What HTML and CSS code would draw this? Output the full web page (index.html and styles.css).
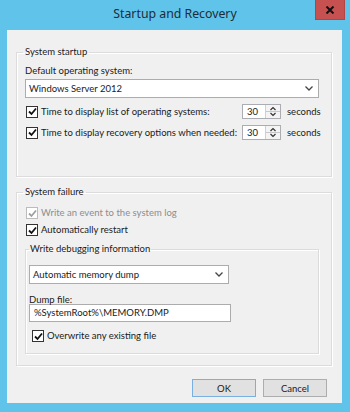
FILE: index.html
```html
<!DOCTYPE html>
<html>
<head>
<meta charset="utf-8">
<link rel="stylesheet" href="styles.css">
</head>
<body>
<div class="window">
  <div class="titlebar">
    <span class="title">Startup and Recovery</span>
    <div class="close"><svg width="10" height="8" viewBox="0 0 10 8"><path d="M1.5 0.5 L8.5 7.5 M8.5 0.5 L1.5 7.5" stroke="#111" stroke-width="2"/></svg></div>
  </div>
  <div class="client">
    <fieldset class="group g1">
      <legend>System startup</legend>
      <div class="label">Default operating system:</div>
      <div class="select wide"><span>Windows Server 2012</span><svg class="chev" width="8" height="5" viewBox="0 0 8 5"><path d="M0.5 0.5 L4 4 L7.5 0.5" fill="none" stroke="#444" stroke-width="1.3"/></svg></div>
      <div class="spinrow r1">
        <div class="check"><span class="box"><svg width="9" height="9" viewBox="0 0 9 9"><path d="M1 4.5 L3.5 7 L8 1.5" fill="none" stroke="#111" stroke-width="1.8"/></svg></span><span>Time to display list of operating systems:</span></div>
        <div class="spin"><span class="num">30</span><span class="arrows"><svg width="14" height="13" viewBox="0 0 14 13"><path d="M4.5 5 L7 2.5 L9.5 5" fill="none" stroke="#333" stroke-width="1.2"/><path d="M4.5 8 L7 10.5 L9.5 8" fill="none" stroke="#333" stroke-width="1.2"/><path d="M0 6.5 H14" stroke="#c8c8c8" stroke-width="1"/></svg></span></div>
        <span class="secs">seconds</span>
      </div>
      <div class="spinrow r2">
        <div class="check"><span class="box"><svg width="9" height="9" viewBox="0 0 9 9"><path d="M1 4.5 L3.5 7 L8 1.5" fill="none" stroke="#111" stroke-width="1.8"/></svg></span><span>Time to display recovery options when needed:</span></div>
        <div class="spin"><span class="num">30</span><span class="arrows"><svg width="14" height="13" viewBox="0 0 14 13"><path d="M4.5 5 L7 2.5 L9.5 5" fill="none" stroke="#333" stroke-width="1.2"/><path d="M4.5 8 L7 10.5 L9.5 8" fill="none" stroke="#333" stroke-width="1.2"/><path d="M0 6.5 H14" stroke="#c8c8c8" stroke-width="1"/></svg></span></div>
        <span class="secs">seconds</span>
      </div>
    </fieldset>
    <fieldset class="group g2">
      <legend>System failure</legend>
      <div class="check disabled c1"><span class="box"><svg width="9" height="9" viewBox="0 0 9 9"><path d="M1 4.5 L3.5 7 L8 1.5" fill="none" stroke="#a0a0a0" stroke-width="1.8"/></svg></span><span>Write an event to the system log</span></div>
      <div class="check c2"><span class="box"><svg width="9" height="9" viewBox="0 0 9 9"><path d="M1 4.5 L3.5 7 L8 1.5" fill="none" stroke="#111" stroke-width="1.8"/></svg></span><span>Automatically restart</span></div>
      <fieldset class="group inner">
        <legend>Write debugging information</legend>
        <div class="select dump"><span>Automatic memory dump</span><svg class="chev" width="8" height="5" viewBox="0 0 8 5"><path d="M0.5 0.5 L4 4 L7.5 0.5" fill="none" stroke="#444" stroke-width="1.3"/></svg></div>
        <div class="label dl">Dump file:</div>
        <div class="textbox">%SystemRoot%\MEMORY.DMP</div>
        <div class="check c3"><span class="box"><svg width="9" height="9" viewBox="0 0 9 9"><path d="M1 4.5 L3.5 7 L8 1.5" fill="none" stroke="#111" stroke-width="1.8"/></svg></span><span>Overwrite any existing file</span></div>
      </fieldset>
    </fieldset>
    <div class="buttons">
      <button class="btn default">OK</button>
      <button class="btn">Cancel</button>
    </div>
  </div>
</div>
</body>
</html>
```
FILE: styles.css
```css
html, body {
  margin: 0;
  padding: 0;
}
body {
  width: 350px;
  height: 412px;
  overflow: hidden;
  font-family: Lato, "Noto Sans", sans-serif;
  font-size: 9.5px;
  color: #1a1a1a;
}
.window {
  width: 350px;
  height: 412px;
  box-sizing: border-box;
  background: #60c4ea;
  padding: 0 8px 9px 7px;
  display: flex;
  flex-direction: column;
}
.titlebar {
  height: 30px;
  flex: none;
  display: grid;
  grid-template-columns: 1fr auto 1fr;
  margin: 0 -8px 0 -7px;
}
.title {
  grid-column: 2;
  font-family: "Noto Sans", sans-serif;
  font-size: 12.3px;
  line-height: 28px;
  color: #1c2d38;
}
.close {
  grid-column: 3;
  justify-self: end;
  margin-right: 5px;
  width: 30px;
  height: 20px;
  box-sizing: border-box;
  background: #c75050;
  border: 1px solid #b14545;
  border-top: none;
  display: flex;
  align-items: center;
  justify-content: center;
}
.client {
  flex: 1;
  background: #f0f0f0;
  padding: 0 9px;
  display: flex;
  flex-direction: column;
  border-right: 1px solid #e4f1f7;
}
.group {
  margin: 0;
  border: 1px solid #dcdcdc;
  box-shadow: inset 1px 1px 0 #fff, 1px 1px 0 #fff;
  min-width: 0;
}
.group > legend {
  padding: 0 2px;
  margin-left: -2px;
  line-height: 14px;
}
.g1 {
  margin-top: 15px;
  padding: 5px 12px 36px 8px;
}
.g2 {
  margin-top: 8px;
  padding: 7px 12px 11px 8px;
}
.inner {
  margin-top: 5px;
  padding: 0 3px 10px 3px;
}
.inner > legend {
  margin-left: 0;
  padding: 0 1px;
}
.label {
  line-height: 14px;
}
.select {
  box-sizing: border-box;
  height: 19px;
  background: #fff;
  border: 1px solid #acacac;
  display: flex;
  align-items: center;
  justify-content: space-between;
  padding: 0 5px 0 3px;
}
.select.wide {
  margin-top: 1px;
}
.select.dump {
  margin-top: 9px;
  width: 200px;
}
.chev {
  flex: none;
}
.spinrow {
  display: grid;
  grid-template-columns: minmax(0, 1fr) 39px 32px;
  column-gap: 6px;
  align-items: center;
  height: 15px;
}
.r1 { margin-top: 6px; }
.r2 { margin-top: 6px; }
.secs {
  white-space: nowrap;
}
.check {
  display: flex;
  align-items: center;
  gap: 3px;
  line-height: 14px;
  white-space: nowrap;
}
.box {
  box-sizing: border-box;
  width: 12px;
  height: 12px;
  flex: none;
  border: 1px solid #333;
  background: #fff;
  display: flex;
  align-items: center;
  justify-content: center;
  margin-left: 1px;
}
.disabled { color: #8d8d8d; }
.disabled .box { border-color: #bcbcbc; }
.c2 { margin-top: 3px; }
.c3 { margin-top: 7px; margin-left: 2px; }
.spin {
  box-sizing: border-box;
  height: 15px;
  border: 1px solid #abadb3;
  background: #fff;
  display: flex;
  align-items: center;
  justify-content: space-between;
  padding-left: 4px;
}
.arrows {
  display: flex;
  height: 13px;
  border-left: 1px solid #d0d0d0;
  background: #f4f4f4;
}
.dl {
  margin-top: 9px;
}
.textbox {
  box-sizing: border-box;
  width: 202px;
  height: 18px;
  margin-top: -3px;
  background: #fff;
  border: 1px solid #acacac;
  line-height: 16px;
  padding-left: 4px;
}
.buttons {
  margin-top: 13px;
  display: flex;
  justify-content: flex-end;
  gap: 7px;
  padding-right: 5px;
}
.btn {
  width: 64px;
  height: 18px;
  box-sizing: border-box;
  margin: 0;
  padding: 0;
  font: inherit;
  color: #1a1a1a;
  background: #e1e1e1;
  border: 1px solid #adadad;
}
.btn.default {
  border-color: #7ab0df;
}
```
